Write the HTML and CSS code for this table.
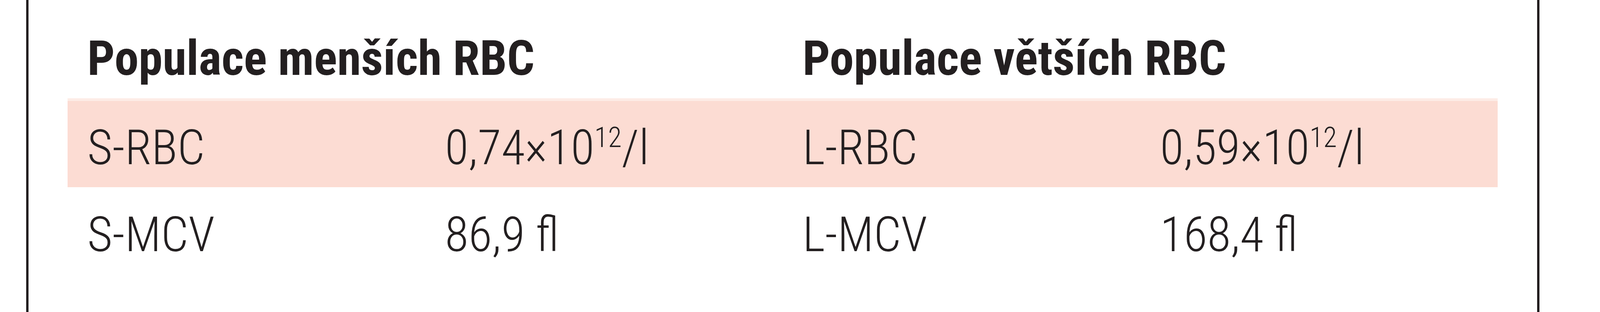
FILE: index.html
```html
<!DOCTYPE html>
<html lang="cs">
<head>
<meta charset="utf-8">
<title>Populace RBC</title>
<link rel="stylesheet" href="styles.css">
</head>
<body>
<div class="frame">
  <div class="table">
    <div class="row head">
      <div class="cell wide">Populace menších RBC</div>
      <div class="cell wide">Populace větších RBC</div>
    </div>
    <div class="row shaded">
      <div class="cell">S-RBC</div>
      <div class="cell">0,74×10<sup class="exp">12</sup>/l</div>
      <div class="cell">L-RBC</div>
      <div class="cell">0,59×10<sup class="exp">12</sup>/l</div>
    </div>
    <div class="row">
      <div class="cell">S-MCV</div>
      <div class="cell">86,9 fl</div>
      <div class="cell">L-MCV</div>
      <div class="cell">168,4 fl</div>
    </div>
  </div>
</div>
</body>
</html>
```
FILE: styles.css
```css
html, body {
  margin: 0;
  padding: 0;
  background: #ffffff;
  overflow: hidden;
}

body {
  font-family: Roboto, "Open Sans", "Liberation Sans", sans-serif;
  color: #231f20;
}

.frame {
  box-sizing: border-box;
  margin-left: 1.624vw;
  width: 94.6vw;
  height: 800px;
  border-left: 6px solid #231f20;
  border-right: 6px solid #231f20;
  padding: 0 2.463vw 0 2.445vw;
}

.table {
  display: flex;
  flex-direction: column;
}

.row {
  display: grid;
  grid-template-columns: repeat(4, 1fr);
  font-size: 124px;
  line-height: 150px;
  font-weight: 300;
  font-stretch: condensed;
  padding: 47px 0 26px;
  white-space: nowrap;
}

.row.head {
  font-weight: 700;
  padding: 75px 0 27px;
}

.row.shaded {
  background: #fcdcd3;
  border-top: 7px solid #fdece6;
  padding-top: 45px;
}

.cell {
  padding-left: 1.241vw;
}

.cell.wide {
  grid-column: span 2;
}

.exp {
  font-size: 72px;
  line-height: 0;
  vertical-align: 44px;
}
```
